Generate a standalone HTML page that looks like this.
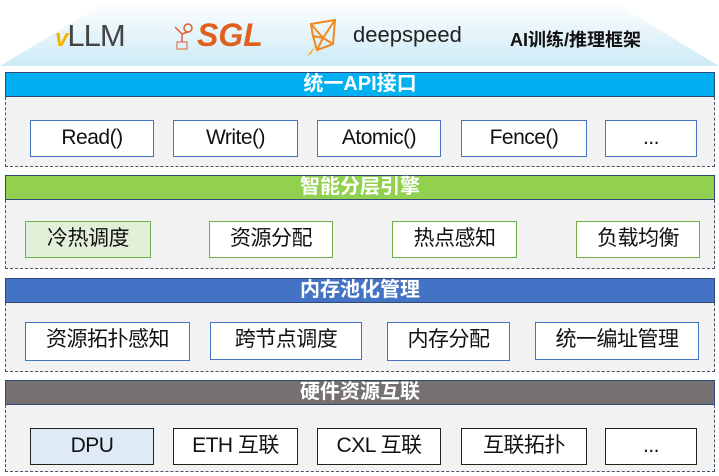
<!DOCTYPE html>
<html><head><meta charset="utf-8"><style>
*{margin:0;padding:0;box-sizing:border-box}
body{width:719px;height:476px;background:#fff;position:relative;overflow:hidden;font-family:"Liberation Sans","Noto Sans CJK SC",sans-serif}
.a{position:absolute}
.hdr{position:absolute;left:5px;width:710px;height:25px;border:1.5px solid #2f4a7a;color:#fff;font-weight:bold;font-size:20px;line-height:22px;text-align:center}
.body{position:absolute;left:5px;width:710px;background:#f2f2f2;border:1.5px dashed #44546a;border-top:none}
.b{position:absolute;height:37px;background:#fff;border:1.5px solid #4472c4;font-size:21px;line-height:34px;text-align:center;color:#111;letter-spacing:-0.5px}
.g{border-color:#70ad47}
.k{border-color:#222}
</style></head><body>
<svg class="a" style="left:0;top:0" width="719" height="70"><defs><linearGradient id="gr" x1="0" y1="0" x2="0" y2="1"><stop offset="0" stop-color="#fff"/><stop offset="1" stop-color="#cdeaf6"/></linearGradient></defs><polygon points="110,0 610,0 719,66 0,66" fill="url(#gr)"/></svg>
<div class="a" style="left:55px;top:18px;font-size:31px;color:#444;letter-spacing:-1px"><span style="color:#f5b400;font-style:italic;font-weight:bold;font-size:24px">v</span>LLM</div>
<svg class="a" style="left:172px;top:22px" width="24" height="30"><circle cx="16" cy="6" r="4" fill="none" stroke="#e06030" stroke-width="1.5"/><path d="M3 5 L10 12 L16 10 M10 12 L10 20" stroke="#e06030" fill="none" stroke-width="1.5"/><rect x="5" y="20" width="10" height="7" fill="none" stroke="#e06030"/></svg>
<div class="a" style="left:197px;top:17px;font-size:32px;color:#e0601d;font-style:italic;font-weight:bold">SGL</div>
<svg class="a" style="left:303px;top:16px" width="40" height="40"><path d="M8 8 L32 4 L30 28 L14 34 L10 20 Z M8 8 L20 22 L32 4 M10 20 L20 22 L30 28 M20 22 L14 34" stroke="#f08a20" fill="none" stroke-width="2"/><path d="M4 40 L12 30 L8 38 Z" fill="#f5b400"/></svg>
<div class="a" style="left:353px;top:22px;font-size:22px;color:#222">deepspeed</div>
<div class="a" style="left:510px;top:26px;font-size:18px;color:#111;font-weight:bold">AI训练/推理框架</div>

<div class="hdr" style="top:72px;background:#00b0f0">统一API接口</div>
<div class="body" style="top:97px;height:70px"></div>
<div class="b" style="left:30px;top:120px;width:124px">Read()</div>
<div class="b" style="left:173px;top:120px;width:125px">Write()</div>
<div class="b" style="left:317px;top:120px;width:124px">Atomic()</div>
<div class="b" style="left:461px;top:120px;width:126px">Fence()</div>
<div class="b" style="left:605px;top:120px;width:92px">...</div>

<div class="hdr" style="top:175px;background:#92d050">智能分层引擎</div>
<div class="body" style="top:200px;height:69px"></div>
<div class="b g" style="left:25px;top:221px;width:126px;background:#e2f0d9">冷热调度</div>
<div class="b g" style="left:209px;top:221px;width:124px">资源分配</div>
<div class="b g" style="left:392px;top:221px;width:125px">热点感知</div>
<div class="b g" style="left:576px;top:221px;width:124px">负载均衡</div>

<div class="hdr" style="top:278px;background:#4472c4">内存池化管理</div>
<div class="body" style="top:303px;height:69px"></div>
<div class="b" style="left:25px;top:322px;width:165px;height:39px">资源拓扑感知</div>
<div class="b" style="left:210px;top:322px;width:152px;height:38px">跨节点调度</div>
<div class="b" style="left:387px;top:322px;width:123px;height:39px">内存分配</div>
<div class="b" style="left:535px;top:322px;width:164px;height:38px">统一编址管理</div>

<div class="hdr" style="top:380px;background:#767171">硬件资源互联</div>
<div class="body" style="top:405px;height:67px"></div>
<div class="b k" style="left:30px;top:428px;width:124px;background:#deebf7">DPU</div>
<div class="b k" style="left:173px;top:428px;width:125px">ETH 互联</div>
<div class="b k" style="left:317px;top:428px;width:124px">CXL 互联</div>
<div class="b k" style="left:461px;top:428px;width:126px">互联拓扑</div>
<div class="b k" style="left:605px;top:428px;width:92px">...</div>
</body></html>
